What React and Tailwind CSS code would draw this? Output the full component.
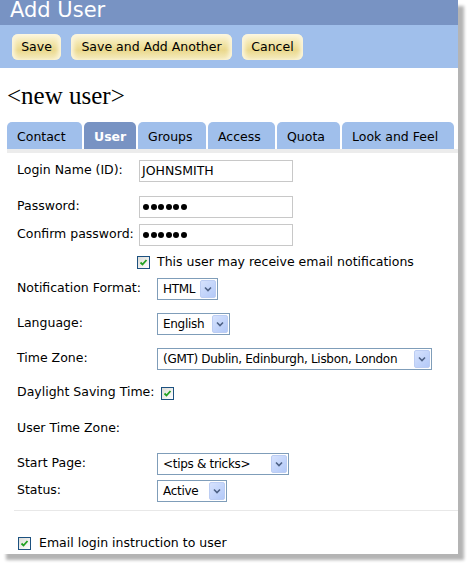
import React from 'react';

const font = { fontFamily: '"DejaVu Sans", Verdana, sans-serif' };

function Button({ children, width }) {
    return (
        <div
            className={`${width} h-[26px] flex items-center justify-center rounded-[6px] text-[12.5px] text-black bg-[linear-gradient(to_bottom,#fdf8e2_0%,#f4e8b2_30%,#ead88b_62%,#f6edc4_100%)] shadow-[inset_5px_0_4px_-2px_#fbf5dc,inset_-5px_0_4px_-2px_#fbf5dc]`}
        >
            {children}
        </div>
    );
}

function Checkbox() {
    return (
        <div className="w-[13px] h-[13px] shrink-0 border border-[#1c5180] bg-[linear-gradient(135deg,#dcdcd7,#ffffff)] flex items-center justify-center">
            <svg width="9" height="9" viewBox="0 0 9 9">
                <path d="M1.5 4.5 L3.5 6.5 L7.5 2" fill="none" stroke="#21a121" strokeWidth="1.8" />
            </svg>
        </div>
    );
}

function Select({ value, width }) {
    return (
        <div className={`${width} h-[22px] border border-[#7f9db9] bg-white flex items-center p-[1px]`}>
            <span className="flex-1 pl-[4px] text-[12px] tracking-[-0.3px] text-black whitespace-nowrap overflow-hidden">{value}</span>
            <div className="w-[16px] h-full shrink-0 rounded-[2px] bg-[linear-gradient(135deg,#d6e2fd,#b3c9f8)] border border-[#bccdf3] flex items-center justify-center">
                <svg width="8" height="6" viewBox="0 0 8 6">
                    <path d="M1 1.5 L4 4.5 L7 1.5" fill="none" stroke="#4d6185" strokeWidth="1.6" />
                </svg>
            </div>
        </div>
    );
}

function TextBox({ children }) {
    return (
        <div className="w-[154px] h-[22px] border border-[#c8c8c8] bg-white flex items-center pl-[2px] text-[12.5px] text-black">
            {children}
        </div>
    );
}

function Dots() {
    return (
        <div className="flex gap-[1.6px] pl-[1px]">
            {[0, 1, 2, 3, 4, 5].map(i => (
                <div key={i} className="w-[6px] h-[6px] rounded-full bg-black" />
            ))}
        </div>
    );
}

export default function App() {
    const tabs = [
        { name: 'Contact', w: 'w-[75px]' },
        { name: 'User', w: 'w-[52px]', active: true },
        { name: 'Groups', w: 'w-[68px]' },
        { name: 'Access', w: 'w-[67px]' },
        { name: 'Quota', w: 'w-[63px]' },
        { name: 'Look and Feel', w: 'w-[112px]' }
    ];

    return (
        <div className="w-[469px] h-[564px] bg-white" style={font}>
            <div className="w-[458px] h-[554px] bg-white flex flex-col shadow-[6px_6px_3px_#b4b4b4]">
                {/* Title bar */}
                <div className="h-[25px] bg-[#7893c3] overflow-hidden pl-[10px]">
                    <span className="block text-[21px] leading-[20px] text-white">Add User</span>
                </div>

                {/* Toolbar */}
                <div className="h-[43px] bg-[#a0bfeb] flex items-start gap-[10px] pl-[12px] pt-[9px]">
                    <Button width="w-[49px]">Save</Button>
                    <Button width="w-[161px]">Save and Add Another</Button>
                    <Button width="w-[61px]">Cancel</Button>
                </div>

                {/* Heading */}
                <div
                    className="mt-[15px] mb-[14px] pl-[7px] text-[25px] leading-[25px] text-black"
                    style={{ fontFamily: '"Liberation Serif", "Times New Roman", serif' }}
                >
                    &lt;new user&gt;
                </div>

                {/* Tabs */}
                <div className="pl-[7px] flex gap-[2px]">
                    {tabs.map(tab => (
                        <div
                            key={tab.name}
                            className={`${tab.w} h-[27px] rounded-t-[5px] pl-[10px] pt-[3px] flex items-center text-[12.5px] whitespace-nowrap ${tab.active ? 'bg-[#7893c3] text-white font-bold' : 'bg-[#a0bfeb] text-black'}`}
                        >
                            {tab.name}
                        </div>
                    ))}
                </div>
                <div className="ml-[7px] h-[4px] bg-[#ececec]" />

                {/* Form */}
                <div className="flex flex-col text-[12.5px] text-black">
                    <div className="mt-[7px] h-[22px] flex items-center pl-[17px]">
                        <span className="w-[122px] -mt-[2px]">Login Name (ID):</span>
                        <TextBox>JOHNSMITH</TextBox>
                    </div>
                    <div className="mt-[14px] h-[22px] flex items-center pl-[17px]">
                        <span className="w-[122px] -mt-[2px]">Password:</span>
                        <TextBox><Dots /></TextBox>
                    </div>
                    <div className="mt-[6px] h-[22px] flex items-center pl-[17px]">
                        <span className="w-[122px] -mt-[2px]">Confirm password:</span>
                        <TextBox><Dots /></TextBox>
                    </div>
                    <div className="mt-[8px] h-[16px] flex items-center pl-[137px] gap-[7px]">
                        <Checkbox />
                        <span>This user may receive email notifications</span>
                    </div>
                    <div className="mt-[8px] h-[22px] flex items-center pl-[17px]">
                        <span className="w-[140px] -mt-[2px]">Notification Format:</span>
                        <Select value="HTML" width="w-[61px]" />
                    </div>
                    <div className="mt-[13px] h-[22px] flex items-center pl-[17px]">
                        <span className="w-[140px] -mt-[2px]">Language:</span>
                        <Select value="English" width="w-[73px]" />
                    </div>
                    <div className="mt-[13px] h-[22px] flex items-center pl-[17px]">
                        <span className="w-[140px] -mt-[2px]">Time Zone:</span>
                        <Select value="(GMT) Dublin, Edinburgh, Lisbon, London" width="w-[275px]" />
                    </div>
                    <div className="mt-[12px] h-[22px] flex items-center pl-[17px]">
                        <span className="w-[144px] -mt-[2px]">Daylight Saving Time:</span>
                        <Checkbox />
                    </div>
                    <div className="mt-[14px] h-[22px] flex items-center pl-[17px]">
                        <span className="-mt-[2px]">User Time Zone:</span>
                    </div>
                    <div className="mt-[13px] h-[22px] flex items-center pl-[17px]">
                        <span className="w-[140px] -mt-[2px]">Start Page:</span>
                        <Select value="<tips & tricks>" width="w-[132px]" />
                    </div>
                    <div className="mt-[5px] h-[22px] flex items-center pl-[17px]">
                        <span className="w-[140px] -mt-[2px]">Status:</span>
                        <Select value="Active" width="w-[70px]" />
                    </div>
                    <div className="mt-[8px] ml-[14px] border-t border-[#e8e8e8]" />
                    <div className="mt-[24px] h-[16px] flex items-center pl-[18px] gap-[8px]">
                        <Checkbox />
                        <span>Email login instruction to user</span>
                    </div>
                </div>
            </div>
        </div>
    );
}
